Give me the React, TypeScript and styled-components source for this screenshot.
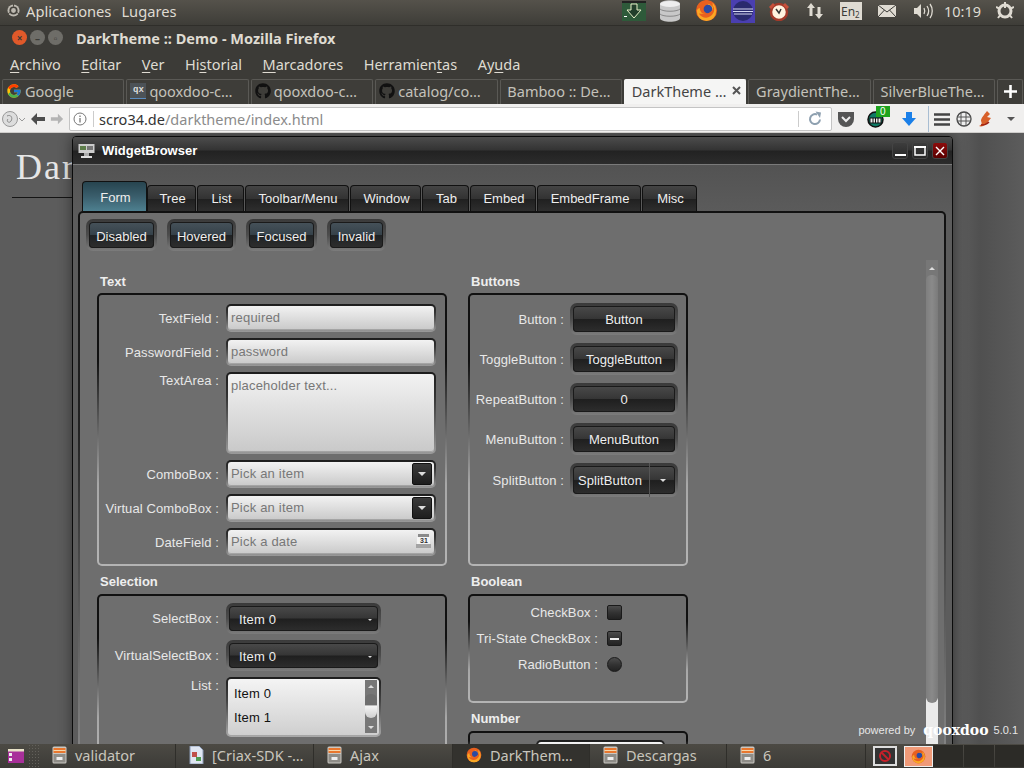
import React from "react";
import styled, { createGlobalStyle } from "styled-components";
import { FaGithub } from "react-icons/fa";
import { FcGoogle } from "react-icons/fc";

const GlobalStyle = createGlobalStyle`
  html, body { margin: 0; padding: 0; background: #3c3b37; overflow: hidden; }
  * { box-sizing: border-box; }
`;

const ubuntu = `"Noto Sans", "Open Sans", sans-serif`;
const qx = `"Liberation Sans", Arial, sans-serif`;

const Screen = styled.div`
  width: 1024px; height: 768px; display: flex; flex-direction: column; overflow: hidden; position: relative;
  font-family: ${ubuntu};
`;

/* ---------- top panel ---------- */
const TopPanel = styled.div`
  height: 26px; flex: none; display: flex; align-items: center; padding: 0 0 4px 7px; color: #dfdbd2; font-size: 14.7px;
  background: linear-gradient(#55524b, #3e3d38); border-bottom: 1px solid #2f2e2a;
`;
const PanelMenu = styled.span` margin-left: ${(p: { $gap: number }) => p.$gap}px; `;
const Tray = styled.div` margin-left: auto; display: flex; align-items: center; height: 24px; `;
const TraySlot = styled.div<{ $w: number }>`
  width: ${(p) => p.$w}px; flex: none; display: flex; justify-content: center; align-items: center; height: 24px;
  color: #dfdbd2; font-size: 14.5px;
`;

/* ---------- title / menu ---------- */
const TitleBar = styled.div`
  height: 26px; flex: none; display: flex; align-items: center; background: #3c3b37; padding: 0 0 3px 12px;
`;
const WinBtn = styled.span<{ $c: string }>`
  width: 15px; height: 15px; border-radius: 50%; margin-right: 3px; background: ${(p) => p.$c};
  display: flex; align-items: center; justify-content: center; color: #3c3b37; font-size: 10px; line-height: 1; font-weight: 700;
`;
const TitleText = styled.span` margin-left: 10px; color: #dfdbd2; font-weight: 700; font-size: 14.5px; `;
const MenuBar = styled.div`
  height: 26px; flex: none; display: flex; align-items: center; gap: 20.5px; padding: 0 0 3px 10px;
  background: #3c3b37; color: #dfdbd2; font-size: 14.5px;
`;
const Mnemonic = styled.span` text-decoration: underline; text-underline-offset: 2px; `;

/* ---------- browser tabs ---------- */
const TabStrip = styled.div`
  height: 26px; flex: none; display: flex; gap: 2px; padding: 1px 1px 0 2px; background: #3c3b37;
`;
const BrowserTab = styled.div<{ $active?: boolean }>`
  width: 122.4px; flex: none; display: flex; align-items: center; gap: 3px; padding: 0 4px 3px 3px; white-space: nowrap; overflow: hidden;
  font-size: 14.5px; border: 1px solid ${(p) => (p.$active ? "#f5f5f4" : "#5a5955")}; border-bottom: none; border-radius: 2px 2px 0 0;
  background: ${(p) => (p.$active ? "#f5f5f4" : "#3e3d39")}; color: ${(p) => (p.$active ? "#444" : "#c4c2bb")};
`;
const TabLabel = styled.span` flex: 1; overflow: hidden; `;
const NewTab = styled(BrowserTab)` width: 26px; justify-content: center; padding: 0 0 1px; `;
const QxBadge = styled.span`
  width: 16px; height: 16px; background: #4c5257; color: #ddd; font: 700 9px "Liberation Mono", monospace;
  display: flex; align-items: center; justify-content: center; border-bottom: 1px solid #5b8cc0; flex: none;
`;

/* ---------- url bar ---------- */
const NavBar = styled.div`
  height: 29px; flex: none; display: flex; align-items: center; background: #f0efee; border-bottom: 1px solid #cfcdcb; padding: 2px 0 0 2px;
`;
const NavIcons = styled.div` width: 67px; flex: none; display: flex; align-items: center; `;
const UrlBox = styled.div`
  width: 763px; height: 24px; flex: none; display: flex; align-items: center; background: #fff; border: 1px solid #c4c4c4; border-radius: 2px;
  padding-left: 3px; font-size: 14.5px; color: #8b8b8b;
`;
const UrlHost = styled.span` color: #333; `;
const UrlSep = styled.span` width: 1px; height: 16px; background: #ccc; margin: 0 5px 0 6px; flex: none; `;
const UrlSpacer = styled.span` flex: 1; `;
const UrlSepEnd = styled.span` width: 1px; height: 16px; background: #ccc; margin-right: 8px; flex: none; `;
const ToolSlot = styled.div<{ $w: number }>`
  width: ${(p) => p.$w}px; flex: none; display: flex; align-items: center; justify-content: center; position: relative; height: 26px;
`;
const ToolBadge = styled.span`
  position: absolute; top: 0; left: 16px; background: #1ea31e; color: #fff; font: 10px ${qx}; padding: 0 4px; line-height: 11px;
`;
const ToolDivider = styled.span` width: 1px; height: 26px; background: #a8bdd2; flex: none; `;

/* ---------- page ---------- */
const Page = styled.div`
  flex: 1; position: relative; overflow: hidden; background: linear-gradient(90deg, #5c5c5c 0, #5c5c5c 960px, #505050 980px, #5c5c5c 1024px);
`;
const PageHeading = styled.div`
  padding: 11px 0 0 16px; font: 400 36px/46px "Liberation Serif", serif; color: #e6e6e6; letter-spacing: 2px;
  height: 64px; width: 400px;
`;
const PageRule = styled.div` height: 1px; width: 300px; margin-left: 12px; background: #151515; `;

/* ---------- qooxdoo window ---------- */
const QxWindow = styled.div`
  position: absolute; left: 72px; top: 3px; width: 881px; height: 630px; font-family: ${qx}; font-size: 13px; color: #eee;
  background: linear-gradient(#4e4e4e, #5c5c5c 80px); border: 1px solid #0b0b0b; border-radius: 4px 4px 0 0; display: flex; flex-direction: column;
  box-shadow: 0 0 14px rgba(0, 0, 0, 0.45);
`;
const QxTitleBar = styled.div`
  height: 28px; flex: none; display: flex; align-items: center; padding: 0 4px 0 5px; border-bottom: 1px solid #7a7a7a;
  background: linear-gradient(#4c4c4c 0, #333 48%, #222 52%, #2c2c2c 100%); border-radius: 3px 3px 0 0;
`;
const QxTitle = styled.span` font-weight: 700; color: #fff; margin-left: 7px; font-size: 13px; `;
const QxCaptionGroup = styled.div` margin-left: auto; display: flex; gap: 4px; `;
const QxCaption = styled.span<{ $close?: boolean }>`
  width: 16px; height: 17px; border-radius: 3px; display: flex; align-items: center; justify-content: center;
  background: ${(p) => (p.$close ? "linear-gradient(#8c0c0c, #5a0000)" : "linear-gradient(#3d3d3d, #272727)")}; border: 1px solid #444;
`;
const QxBody = styled.div` padding: 16px 6px 0 5px; flex: 1; display: flex; flex-direction: column; min-height: 0; `;
const QxTabBar = styled.div` display: flex; align-items: flex-end; gap: 1px; padding-left: 4px; height: 30px; flex: none; `;
const QxTab = styled.div<{ $active?: boolean; $w: number }>`
  width: ${(p) => p.$w}px; height: ${(p) => (p.$active ? 30 : 26)}px; padding: ${(p) => (p.$active ? "2px 0 0 2px" : "0 0 0 2px")}; margin-right: ${(p) => (p.$active ? -1 : 0)}px;
  display: flex; align-items: center; justify-content: center; color: #eee; font-size: 13px;
  border: 1px solid #111; border-bottom: none; border-radius: 4px 4px 0 0;
  background: ${(p) =>
    p.$active
      ? "linear-gradient(#27444f, #3a5e6c 50%, #4e8090)"
      : "linear-gradient(#444 0, #333 50%, #202020 52%, #2e2e2e 100%)"};
`;
const QxPane = styled.div`
  position: relative; flex: 1; min-height: 0; overflow: hidden; border: 2px solid transparent; border-radius: 5px 5px 0 0; padding: 6px 0 0 6px;
  background: linear-gradient(#6e6e6e, #6e6e6e) padding-box, linear-gradient(#111, #222 40%, #888) border-box;
`;
const StateBar = styled.div` display: flex; gap: 10px; `;

const Frame = styled.div<{ $w?: number }>`
  display: inline-flex; flex: none; padding: 3px; border-radius: 7px; width: ${(p) => (p.$w ? `${p.$w}px` : "auto")};
  background: linear-gradient(#3a3a3a, #4c4c4c 50%, #7c7c7c);
`;
const DarkFace = styled.div<{ $h: number; $align?: string }>`
  flex: 1; height: ${(p) => p.$h}px; border-radius: 4px; display: flex; align-items: center; padding: 0 6px 0 6px; color: #eee; white-space: nowrap;
  justify-content: ${(p) => p.$align || "center"}; font-size: 13px; box-shadow: inset 0 0 0 1px #1a1a1a; 
  background: linear-gradient(#4a4a4a 0, #363636 48%, #1f1f1f 52%, #2e2e2e 100%);
`;
const StateFace = styled(DarkFace)` padding: 2px 0 0; background: linear-gradient(#46525a 0, #36424a 48%, #1f2224 52%, #2e2e2e 100%); `;
const SelectFace = styled(DarkFace)` padding-top: 2px; letter-spacing: 0.15px; `;

const FormGrid = styled.div`
  display: grid; grid-template-columns: 350px 220px; column-gap: 21px; margin: 24px 0 0 11px; row-gap: 9px; align-items: stretch;
`;
const Group = styled.div` display: flex; flex-direction: column; `;
const GroupStack = styled.div` display: flex; flex-direction: column; gap: 9px; `;
const GroupTitle = styled.div` height: 18px; line-height: 14px; padding-left: 3px; font-weight: 700; font-size: 13px; color: #eee; flex: none; `;
const LowerTitle = styled(GroupTitle)` height: 19px; `;
const GroupBox = styled.div<{ $pad: string; $gap: number; $h?: number }>`
  flex: 1; display: flex; flex-direction: column; gap: ${(p) => p.$gap}px; padding: ${(p) => p.$pad}; border: 2px solid transparent; border-radius: 5px;
  ${(p) => (p.$h ? `height: ${p.$h}px; flex: none;` : "")}
  background: linear-gradient(#6e6e6e, #6e6e6e) padding-box, linear-gradient(#111 0, #111 25%, #a8a8a8 70%, #b4b4b4) border-box;
`;
const Row = styled.div<{ $label: number; $gap: number; $top?: boolean }>`
  display: grid; grid-template-columns: ${(p) => p.$label}px 1fr; column-gap: ${(p) => p.$gap}px; align-items: ${(p) => (p.$top ? "start" : "center")};
`;
const Label = styled.div`
  text-align: right; white-space: nowrap; color: #e8e8e8; font-size: 13px; letter-spacing: 0.1px;
`;
const TopLabel = styled(Label)` padding-top: 1px; `;
const Field = styled.div<{ $h?: number }>`
  height: ${(p) => p.$h || 28}px; border: 2px solid transparent; border-radius: 5px; padding: 0 3px 0 3px; color: #777; font-size: 13px; letter-spacing: 0.2px; display: flex; align-items: ${(p) => (p.$h ? "flex-start" : "center")};
  padding-top: ${(p) => (p.$h ? 4 : 0)}px; padding-bottom: ${(p) => (p.$h ? 0 : 2)}px; position: relative;
  background: linear-gradient(#f2f2f2, #c9c9c9) padding-box, linear-gradient(#1c1c1c, #333 30%, #9a9a9a) border-box;
  box-shadow: inset 0 -1px 0 #a4a4a4;
`;
const FieldText = styled.span` flex: 1; `;
const ComboButton = styled.span`
  width: 20px; height: 22px; border-radius: 2px; background: linear-gradient(#3a3a3a, #1e1e1e); border: 1px solid #111; flex: none; margin-top: 2px; margin-right: -1px;
  display: flex; align-items: center; justify-content: center;
`;
const CaretDown = styled.span<{ $c?: string; $s?: number }>`
  width: 0; height: 0; flex: none; border-left: ${(p) => p.$s || 3}px solid transparent; border-right: ${(p) => p.$s || 3}px solid transparent;
  border-top: ${(p) => p.$s || 3}px solid ${(p) => p.$c || "#ddd"};
`;
const SplitFace = styled(DarkFace)` padding: 0 0 0 5px; `;
const SplitText = styled.span` flex: 1; letter-spacing: 0.1px; `;
const SplitArrow = styled.span`
  width: 26px; height: 34px; flex: none; display: flex; align-items: center; justify-content: center; border-left: 1px solid #555;
`;
const SelectText = styled.span` flex: 1; padding-left: 4px; `;
const CheckBox = styled.span<{ $round?: boolean }>`
  width: 15px; height: 15px; flex: none; display: flex; align-items: center; justify-content: center; border: 1px solid #1a1a1a;
  border-radius: ${(p) => (p.$round ? "50%" : "2px")}; background: linear-gradient(#4c4c4c, #333 50%, #222);
`;
const Dash = styled.span` width: 9px; height: 2px; background: #eee; `;
const ListFrame = styled.div`
  width: 155px; height: 60px; border: 2px solid transparent; border-radius: 5px; display: flex; padding: 1px 2px 2px 1px;
  background: linear-gradient(#f4f4f4, #cfcfcf) padding-box, linear-gradient(#1c1c1c, #444 40%, #aaa) border-box;
`;
const ListItems = styled.div` flex: 1; padding: 6px 0 0 5px; color: #111; font-size: 13px; display: flex; flex-direction: column; gap: 9px; line-height: 15px; letter-spacing: 0.15px; `;
const ListScroll = styled.div`
  width: 12px; flex: none; background: #777; position: relative; display: flex; flex-direction: column; align-items: center; justify-content: space-between; padding: 5px 0 4px;
`;
const CaretUp = styled.span`
  width: 0; height: 0; border-left: 3px solid transparent; border-right: 3px solid transparent; border-bottom: 3px solid #ddd;
`;
const ListThumb = styled.span`
  position: absolute; top: 14px; left: 0; width: 12px; height: 24px; border-radius: 6px 6px 7px 7px; background: linear-gradient(#6e6e6e 0, #6e6e6e 45%, #f4f4f4 50%, #cfcfcf 100%);
`;
const SpinRow = styled.div` padding-left: 66px; `;
const SpinField = styled(Field)` width: 129px; `;
const Scrollbar = styled.div`
  position: absolute; right: 6px; top: 47px; bottom: 0; width: 12px; background: #777; display: flex; flex-direction: column; align-items: center; padding-top: 7px;
`;
const ScrollThumb = styled.div`
  position: absolute; top: 15px; left: 0; width: 12px; height: 428px; border-radius: 6px 6px 7px 7px; z-index: 1; background: linear-gradient(90deg, #7e7e7e, #8a8a8a 50%, #7a7a7a);
`;
const ScrollRest = styled.div`
  position: absolute; top: 438px; left: 0; right: 0; bottom: 0; background: #eaeaea; z-index: 0;
`;
const ScrollUp = styled(CaretUp)` position: relative; z-index: 2; `;

const Powered = styled.div`
  position: absolute; right: 6px; bottom: 7px; display: flex; align-items: center; color: #e6e6e6; font: 11px/14px ${qx}; z-index: 5;
`;
const PoweredLogo = styled.span`
  font: 700 14px/14px "DejaVu Serif", serif; color: #fff; margin: 0 5px 0 8px;
`;

/* ---------- taskbar ---------- */
const TaskBar = styled.div`
  height: 24px; flex: none; display: flex; align-items: center; color: #c9c6bd; font-size: 14.5px; padding-bottom: 0;
  background: linear-gradient(#4c4a44, #3c3b37);
`;
const ShowDesktop = styled.div` width: 28px; flex: none; display: flex; justify-content: center; padding-left: 3px; `;
const Grip = styled.div`
  width: 12px; height: 24px; flex: none; margin-right: 12px;
  background-image: radial-gradient(#62605a 0.7px, transparent 0.8px); background-size: 3px 3px;
`;
const TaskItem = styled.div<{ $active?: boolean; $w: number }>`
  width: ${(p) => p.$w}px; height: 24px; flex: none; display: flex; align-items: center; gap: 8px; white-space: nowrap; overflow: hidden;
  padding-left: 13px; padding-bottom: 3px; border-right: 1px solid #2f2e2a; background: ${(p) => (p.$active ? "#33322e" : "transparent")};
`;
const FirstTask = styled(TaskItem)` padding-left: 0; `;
const TaskStatus = styled.div` margin-left: 7px; display: flex; gap: 7px; align-items: center; `;
const StopBox = styled.div`
  width: 24px; height: 20px; border: 2px solid #ddd; background: #333; display: flex; align-items: center; justify-content: center;
`;
const FoxBox = styled.div`
  width: 29px; height: 21px; border: 1px solid #eee; background: #f09a78; display: flex; align-items: center; justify-content: center;
`;
const Workspaces = styled.div` margin-left: auto; display: flex; gap: 1px; `;
const Workspace = styled.div` width: 30px; height: 22px; background: #2c2b27; `;

/* ---------- drawings ---------- */
const Firefox = ({ s = 16 }: { s?: number }) => (
  <svg width={s} height={s} viewBox="0 0 24 24" style={{ flex: "none" }}>
    <circle cx="12" cy="12" r="11" fill="#e8601f" />
    <path d="M2 13a10 10 0 0 0 20 0c0-4-1.500-7-4-9 .8 2 .6 3.400.2 4.500-1-2-3-3.500-5.200-3.500 1 1 1.400 2 1.300 3-2 .2-3.500 1.500-3.300 3 2.500-.5 5 .5 5 2.500s-2.500 3-5 2.200C7.500 16 5 13 5 9.500 3 10 2 11.500 2 13z" fill="#f9a825" />
    <circle cx="13.500" cy="10.500" r="4.500" fill="#2b4aa3" />
    <path d="M4 15c2 4 8 6 12 3s5-7 3-11c0 4-2 7-6 8s-6 0-9 0z" fill="#e8601f" />
  </svg>
);
const Cabinet = () => (
  <svg width="15" height="18" viewBox="0 0 15 18" style={{ flex: "none" }}>
    <rect x="0.500" y="0.500" width="14" height="17" rx="1.500" fill="#c9c7c2" />
    <rect x="1.500" y="2" width="12" height="5" fill="#e8772e" />
    <rect x="1.500" y="4" width="12" height="1" fill="#f7d6a8" />
    <rect x="1.500" y="8" width="12" height="8.500" fill="#8f8d88" />
    <rect x="4.500" y="11" width="6" height="3" fill="#eee" />
  </svg>
);
const ClosedX = () => (
  <svg width="10" height="10" viewBox="0 0 10 10"><path d="M1 1l8 8M9 1l-8 8" stroke="#fff" strokeWidth="1.400" /></svg>
);

const mn = (pre: string, m: string, post: string) => (
  <span>{pre}<Mnemonic>{m}</Mnemonic>{post}</span>
);

const qxTabs: [string, number][] = [["Tree", 49], ["List", 47], ["Toolbar/Menu", 104], ["Window", 71], ["Tab", 47], ["Embed", 66], ["EmbedFrame", 104], ["Misc", 55]];

const DateIcon = () => (
  <svg width="15" height="14" viewBox="0 0 15 14" style={{ flex: "none" }}>
    <rect x="2" y="0" width="11" height="3" fill="#8a8a8a" />
    <rect x="1" y="3" width="13" height="7" fill="#f4f4f4" />
    <rect x="0" y="10" width="15" height="4" fill="#a4a4a4" />
    <text x="4" y="9" fontSize="7" fontWeight="700" fontFamily="Liberation Sans" fill="#333">31</text>
  </svg>
);

export default function App() {
  return (
    <Screen>
      <GlobalStyle />
      <TopPanel>
        <svg width="13" height="13" viewBox="0 0 14 14" style={{ flex: "none" }}>
          <circle cx="7" cy="7" r="6.500" fill="#bdb9b0" />
          <circle cx="7" cy="7" r="3.500" fill="none" stroke="#45433d" strokeWidth="1.800" />
          <path d="M7 0v3M1 10.500l2.500-1.500M13 10.500l-2.500-1.500" stroke="#45433d" strokeWidth="1" />
        </svg>
        <PanelMenu $gap={6}>Aplicaciones</PanelMenu>
        <PanelMenu $gap={10}>Lugares</PanelMenu>
        <Tray>
          <TraySlot $w={36}>
            <svg width="24" height="20" viewBox="0 0 24 20"><rect width="24" height="20" fill="#2e5a3a" /><rect width="24" height="2" fill="#222" /><path d="M9 3h6v6h4l-7 8-7-8h4z" fill="#223f2b" stroke="#e8f0c8" /><rect x="2" y="15" width="3" height="1" fill="#fff" /></svg>
          </TraySlot>
          <TraySlot $w={36}>
            <svg width="22" height="22" viewBox="0 0 22 22"><path d="M1 4c0-5 20-5 20 0v14c0 5-20 5-20 0z" fill="#c8c8c8" /><ellipse cx="11" cy="4" rx="10" ry="3" fill="#eee" /><path d="M1 9c3 3 17 3 20 0M1 14c3 3 17 3 20 0" stroke="#888" fill="none" /></svg>
          </TraySlot>
          <TraySlot $w={37}><Firefox s={23} /></TraySlot>
          <TraySlot $w={36}>
            <svg width="24" height="24" viewBox="0 0 24 24"><rect width="24" height="24" fill="#4a3fb0" /><circle cx="12" cy="12" r="10" fill="#2a2a6e" /><path d="M2 10h20M2 12.500h20M3 15h18" stroke="#d6d8f2" strokeWidth="1" /></svg>
          </TraySlot>
          <TraySlot $w={36}>
            <svg width="22" height="20" viewBox="0 0 22 20"><circle cx="11" cy="11" r="8" fill="#fff3df" stroke="#a33a2a" strokeWidth="2.500" /><path d="M1 6l4-4 2 2-4 4zM21 6l-4-4-2 2 4 4z" fill="#c8503a" /><path d="M8 8l3 4 2-4" stroke="#333" strokeWidth="1.500" fill="none" /></svg>
          </TraySlot>
          <TraySlot $w={35}>
            <svg width="18" height="18" viewBox="0 0 18 18"><path d="M5 1l4 5H6.500v8h-3V6H1zM13 17l-4-5h2.500V5h3v7H17z" fill="#dfdbd2" /></svg>
          </TraySlot>
          <TraySlot $w={37}>
            <svg width="22" height="18" viewBox="0 0 22 18"><rect width="22" height="18" fill="#dfdbd2" /><text x="1" y="14" fontSize="12" fontFamily="Noto Sans" fill="#3c3b37">En</text><text x="15" y="16" fontSize="8" fontFamily="Noto Sans" fill="#3c3b37">2</text></svg>
          </TraySlot>
          <TraySlot $w={36}>
            <svg width="18" height="12" viewBox="0 0 18 12"><rect width="18" height="12" fill="#dfdbd2" /><path d="M0 0l9 7 9-7M0 12l6.500-7M18 12l-6.500-7" stroke="#3c3b37" fill="none" /></svg>
          </TraySlot>
          <TraySlot $w={35}>
            <svg width="20" height="16" viewBox="0 0 20 16"><path d="M1 5h3l4-4v14l-4-4H1z" fill="#dfdbd2" /><path d="M11 5c1 2 1 4 0 6M14 3c2 3 2 7 0 10M17 1c3 4 3 10 0 14" stroke="#dfdbd2" strokeWidth="1.300" fill="none" /></svg>
          </TraySlot>
          <TraySlot $w={45}>10:19</TraySlot>
          <TraySlot $w={39}>
            <svg width="18" height="18" viewBox="0 0 18 18"><circle cx="9" cy="9" r="6" fill="none" stroke="#dfdbd2" strokeWidth="3" /><path d="M9 0v6M0 5l4 2M18 5l-4 2M2 16l3-4M16 16l-3-4" stroke="#dfdbd2" strokeWidth="2" /></svg>
          </TraySlot>
        </Tray>
      </TopPanel>

      <TitleBar>
        <WinBtn $c="#e0592a">×</WinBtn>
        <WinBtn $c="#6e6d68">–</WinBtn>
        <WinBtn $c="#6e6d68">▫</WinBtn>
        <TitleText>DarkTheme :: Demo - Mozilla Firefox</TitleText>
      </TitleBar>

      <MenuBar>
        {mn("", "A", "rchivo")}
        {mn("", "E", "ditar")}
        {mn("", "V", "er")}
        {mn("Hi", "s", "torial")}
        {mn("", "M", "arcadores")}
        {mn("Herramien", "t", "as")}
        {mn("Ay", "u", "da")}
      </MenuBar>

      <TabStrip>
        <BrowserTab><FcGoogle size={16} style={{ flex: "none" }} /><TabLabel>Google</TabLabel></BrowserTab>
        <BrowserTab><QxBadge>qx</QxBadge><TabLabel>qooxdoo-c…</TabLabel></BrowserTab>
        <BrowserTab><FaGithub size={16} color="#111" style={{ flex: "none" }} /><TabLabel>qooxdoo-c…</TabLabel></BrowserTab>
        <BrowserTab><FaGithub size={16} color="#111" style={{ flex: "none" }} /><TabLabel>catalog/co…</TabLabel></BrowserTab>
        <BrowserTab><TabLabel>&nbsp;Bamboo :: De…</TabLabel></BrowserTab>
        <BrowserTab $active><TabLabel>&nbsp;DarkTheme …</TabLabel>
          <svg width="9" height="9" viewBox="0 0 9 9" style={{ flex: "none" }}><path d="M1 1l7 7M8 1l-7 7" stroke="#555" strokeWidth="2" /></svg>
        </BrowserTab>
        <BrowserTab><TabLabel>&nbsp;GraydientThe…</TabLabel></BrowserTab>
        <BrowserTab><TabLabel>&nbsp;SilverBlueThe…</TabLabel></BrowserTab>
        <NewTab>
          <svg width="13" height="13" viewBox="0 0 13 13"><path d="M6.500 0v13M0 6.500h13" stroke="#fff" strokeWidth="2.600" /></svg>
        </NewTab>
      </TabStrip>

      <NavBar>
        <NavIcons>
          <svg width="24" height="18" viewBox="0 0 24 18" style={{ flex: "none" }}><circle cx="8" cy="9" r="7.500" fill="#ddd" stroke="#999" /><path d="M5 6c4-2 6 2 4 5s-5 0-3-2" stroke="#888" fill="none" /><path d="M17 8l3 3 3-3" stroke="#999" fill="none" /></svg>
          <svg width="16" height="14" viewBox="0 0 16 14" style={{ flex: "none", marginLeft: 4 }}><path d="M7 1L1 7l6 6V9h8V5H7z" fill="#4d4d4d" /></svg>
          <svg width="14" height="14" viewBox="0 0 16 14" style={{ flex: "none", marginLeft: 4 }}><path d="M9 1l6 6-6 6V9H1V5h8z" fill="#b4b4b4" /></svg>
        </NavIcons>
        <UrlBox>
          <svg width="14" height="14" viewBox="0 0 14 14" style={{ flex: "none" }}><circle cx="7" cy="7" r="6" fill="none" stroke="#777" /><path d="M7 6v4.500M7 3.500v1.500" stroke="#777" strokeWidth="1.300" /></svg>
          <UrlSep />
          <UrlHost>scro34.de</UrlHost>/darktheme/index.html
          <UrlSpacer />
          <UrlSepEnd />
          <svg width="16" height="16" viewBox="0 0 16 16" style={{ flex: "none", marginRight: 8 }}><path d="M13 8.500A5 5 0 1 1 10 3.500" fill="none" stroke="#8ea0b0" strokeWidth="2" /><path d="M8.500 0.500L14 1.500 13 7z" fill="#8ea0b0" /></svg>
        </UrlBox>
        <ToolSlot $w={28}>
          <svg width="18" height="16" viewBox="0 0 18 16"><path d="M1 1h16v7a8 8 0 0 1-16 0z" fill="#555" /><path d="M5 6l4 4 4-4" stroke="#eee" strokeWidth="2" fill="none" /></svg>
        </ToolSlot>
        <ToolSlot $w={30}>
          <svg width="17" height="17" viewBox="0 0 17 17"><circle cx="8.500" cy="8.500" r="7.500" fill="#0e7a66" stroke="#111" strokeWidth="1.500" /><rect x="3" y="7" width="11" height="5" fill="#eee" stroke="#111" /><path d="M6 7v5M8.500 7v5M11 7v5" stroke="#111" /></svg>
          <ToolBadge>0</ToolBadge>
        </ToolSlot>
        <ToolSlot $w={38}>
          <svg width="16" height="16" viewBox="0 0 16 16"><path d="M5 1h6v6h4l-7 8-7-8h4z" fill="#1a7fe8" /></svg>
        </ToolSlot>
        <ToolDivider />
        <ToolSlot $w={26}>
          <svg width="16" height="13" viewBox="0 0 16 13"><path d="M0 1.500h16M0 6.500h16M0 11.500h16" stroke="#444" strokeWidth="2.500" /></svg>
        </ToolSlot>
        <ToolSlot $w={18}>
          <svg width="16" height="16" viewBox="0 0 16 16"><circle cx="8" cy="8" r="7" fill="#eee" stroke="#444" strokeWidth="1.300" /><path d="M1 6h14M1 10h14M5 1v14M10 1v14" stroke="#555" /></svg>
        </ToolSlot>
        <ToolSlot $w={26}>
          <svg width="16" height="17" viewBox="0 0 16 17"><path d="M9 0l3 3-3 3 4 1-4 5c-2 3-6 4-8 3 3-1 3-3 2-5 0-3 3-6 6-10z" fill="#d8602a" /><path d="M3 14c3 0 6-1 8-3" stroke="#a02414" strokeWidth="1.500" fill="none" /></svg>
        </ToolSlot>
        <ToolSlot $w={24}><CaretDown $c="#555" $s={4} /></ToolSlot>
      </NavBar>

      <Page>
        <PageHeading>Dar</PageHeading>
        <PageRule />
        <QxWindow>
          <QxTitleBar>
            <svg width="17" height="14" viewBox="0 0 17 14" style={{ flex: "none" }}><rect x="0.500" y="0" width="16" height="9" fill="#ccc" /><rect x="2" y="2" width="6" height="4" fill="#5d7d4a" /><rect x="9" y="2" width="6" height="4" fill="#777" /><rect x="6" y="9" width="5" height="3" fill="#aaa" /><rect x="3" y="12" width="11" height="2" fill="#ddd" /></svg>
            <QxTitle>WidgetBrowser</QxTitle>
            <QxCaptionGroup>
              <QxCaption><svg width="11" height="11" viewBox="0 0 11 11"><rect x="0" y="9" width="11" height="2" fill="#fff" /></svg></QxCaption>
              <QxCaption><svg width="12" height="11" viewBox="0 0 12 11"><path d="M1 2h10v8H1z" fill="none" stroke="#fff" strokeWidth="1.500" /><rect x="0" y="1" width="12" height="2" fill="#fff" /></svg></QxCaption>
              <QxCaption $close><ClosedX /></QxCaption>
            </QxCaptionGroup>
          </QxTitleBar>
          <QxBody>
            <QxTabBar>
              <QxTab $active $w={65}>Form</QxTab>
              {qxTabs.map(([t, w]) => <QxTab key={t} $w={w}>{t}</QxTab>)}
            </QxTabBar>
            <QxPane>
              <StateBar>
                <Frame $w={71}><StateFace $h={26}>Disabled</StateFace></Frame>
                <Frame $w={69}><StateFace $h={26}>Hovered</StateFace></Frame>
                <Frame $w={71}><StateFace $h={26}>Focused</StateFace></Frame>
                <Frame $w={59}><StateFace $h={26}>Invalid</StateFace></Frame>
              </StateBar>
              <FormGrid>
                <Group>
                  <GroupTitle>Text</GroupTitle>
                  <GroupBox $pad="9px 9px 8px 0" $gap={6}>
                    <Row $label={120} $gap={7}><Label>TextField :</Label><Field>required</Field></Row>
                    <Row $label={120} $gap={7}><Label>PasswordField :</Label><Field>password</Field></Row>
                    <Row $label={120} $gap={7} $top><TopLabel>TextArea :</TopLabel><Field $h={82}>placeholder text...</Field></Row>
                    <Row $label={120} $gap={7}><Label>ComboBox :</Label><Field><FieldText>Pick an item</FieldText><ComboButton><CaretDown $s={4} /></ComboButton></Field></Row>
                    <Row $label={120} $gap={7}><Label>Virtual ComboBox :</Label><Field><FieldText>Pick an item</FieldText><ComboButton><CaretDown $s={4} /></ComboButton></Field></Row>
                    <Row $label={120} $gap={7}><Label>DateField :</Label><Field><FieldText>Pick a date</FieldText><DateIcon /></Field></Row>
                  </GroupBox>
                </Group>
                <Group>
                  <GroupTitle>Buttons</GroupTitle>
                  <GroupBox $pad="8px 8px 0 0" $gap={8}>
                    <Row $label={94} $gap={6}><Label>Button :</Label><Frame><DarkFace $h={26}>Button</DarkFace></Frame></Row>
                    <Row $label={94} $gap={6}><Label>ToggleButton :</Label><Frame><DarkFace $h={26}>ToggleButton</DarkFace></Frame></Row>
                    <Row $label={94} $gap={6}><Label>RepeatButton :</Label><Frame><DarkFace $h={26}>0</DarkFace></Frame></Row>
                    <Row $label={94} $gap={6}><Label>MenuButton :</Label><Frame><DarkFace $h={26}>MenuButton</DarkFace></Frame></Row>
                    <Row $label={94} $gap={6}>
                      <Label>SplitButton :</Label>
                      <Frame><SplitFace $h={28}><SplitText>SplitButton</SplitText><SplitArrow><CaretDown /></SplitArrow></SplitFace></Frame>
                    </Row>
                  </GroupBox>
                </Group>
                <Group>
                  <LowerTitle>Selection</LowerTitle>
                  <GroupBox $pad="7px 0 20px 0" $gap={6}>
                    <Row $label={120} $gap={7}><Label>SelectBox :</Label><Frame $w={155}><SelectFace $h={25}><SelectText>Item 0</SelectText><CaretDown $s={2} /></SelectFace></Frame></Row>
                    <Row $label={120} $gap={7}><Label>VirtualSelectBox :</Label><Frame $w={155}><SelectFace $h={25}><SelectText>Item 0</SelectText><CaretDown $s={2} /></SelectFace></Frame></Row>
                    <Row $label={120} $gap={7} $top>
                      <TopLabel>List :</TopLabel>
                      <ListFrame>
                        <ListItems><span>Item 0</span><span>Item 1</span></ListItems>
                        <ListScroll><CaretUp /><ListThumb /><CaretDown $s={3} /></ListScroll>
                      </ListFrame>
                    </Row>
                  </GroupBox>
                </Group>
                <GroupStack>
                  <Group>
                    <LowerTitle>Boolean</LowerTitle>
                    <GroupBox $pad="9px 0 0 0" $gap={11} $h={109}>
                      <Row $label={128} $gap={9}><Label>CheckBox :</Label><CheckBox /></Row>
                      <Row $label={128} $gap={9}><Label>Tri-State CheckBox :</Label><CheckBox><Dash /></CheckBox></Row>
                      <Row $label={128} $gap={9}><Label>RadioButton :</Label><CheckBox $round /></Row>
                    </GroupBox>
                  </Group>
                  <Group>
                    <LowerTitle>Number</LowerTitle>
                    <GroupBox $pad="7px 0 0 0" $gap={6}>
                      <SpinRow><SpinField /></SpinRow>
                    </GroupBox>
                  </Group>
                </GroupStack>
              </FormGrid>
              <Scrollbar>
                <ScrollUp />
                <ScrollThumb />
                <ScrollRest />
              </Scrollbar>
            </QxPane>
          </QxBody>
        </QxWindow>
        <Powered>
          powered by<PoweredLogo>qooxdoo</PoweredLogo>5.0.1
        </Powered>
      </Page>

      <TaskBar>
        <ShowDesktop>
          <svg width="16" height="14" viewBox="0 0 16 14"><rect width="16" height="14" fill="#a8309a" /><rect width="16" height="2.500" fill="#e8e2c8" /><rect x="1" y="4" width="3" height="3" fill="#eee" /><rect x="1" y="9" width="3" height="3" fill="#eee" /></svg>
        </ShowDesktop>
        <Grip />
        <FirstTask $w={124}><Cabinet />validator</FirstTask>
        <TaskItem $w={138}>
          <svg width="15" height="18" viewBox="0 0 15 18" style={{ flex: "none" }}><path d="M1 0h9l4 4v14H1z" fill="#dfe6f2" stroke="#8a9ab5" /><rect x="3" y="6" width="5" height="5" fill="#c0504a" /><rect x="7" y="11" width="5" height="4" fill="#4f9a50" /></svg>
          [Criax-SDK -…
        </TaskItem>
        <TaskItem $w={139}><Cabinet />Ajax</TaskItem>
        <TaskItem $active $w={137}><Firefox s={16} />DarkThem…</TaskItem>
        <TaskItem $w={137}><Cabinet />Descargas</TaskItem>
        <TaskItem $w={139}><Cabinet />6</TaskItem>
        <TaskStatus>
          <StopBox>
            <svg width="12" height="12" viewBox="0 0 12 12"><circle cx="6" cy="6" r="5" fill="none" stroke="#c8202a" strokeWidth="2" /><path d="M2.500 2.500l7 7" stroke="#c8202a" strokeWidth="2" /></svg>
          </StopBox>
          <FoxBox><Firefox s={15} /></FoxBox>
        </TaskStatus>
        <Workspaces><Workspace /><Workspace /><Workspace /></Workspaces>
      </TaskBar>
    </Screen>
  );
}
